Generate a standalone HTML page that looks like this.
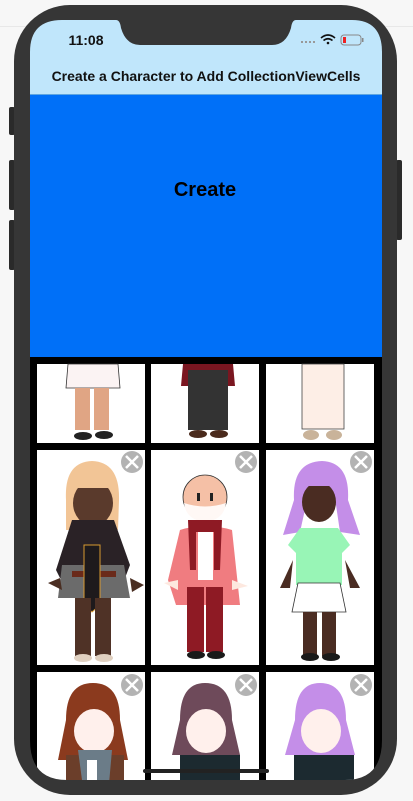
<!DOCTYPE html>
<html><head><meta charset="utf-8"><style>
html,body{margin:0;padding:0;width:413px;height:801px;overflow:hidden;background:#f7f7f7;font-family:"Liberation Sans",Arial,sans-serif}
</style></head><body>
<svg width="413" height="801" viewBox="0 0 413 801" xmlns="http://www.w3.org/2000/svg" style="position:absolute;left:0;top:0">
<defs>
<clipPath id="scr"><path d="M30 20 H116 Q120 20 121 28 Q126 45 140 45 H272 Q286 45 291 28 Q292 20 296 20 H352 Q382 20 382 52 V740 Q382 780 345 780 H67 Q30 780 30 740 V52 Q30 20 62 20 Z"/></clipPath>
<g id="x"><circle r="11" fill="#b3b3b3"/><path d="M-6 -6 L6 6 M6 -6 L-6 6" stroke="#fff" stroke-width="2.5"/></g>
</defs>
<rect x="0" y="26" width="413" height="1" fill="#e8e8e8"/>
<rect x="9" y="107" width="6" height="28" rx="2" fill="#2a2a2a"/>
<rect x="9" y="160" width="6" height="50" rx="2" fill="#2a2a2a"/>
<rect x="9" y="220" width="6" height="50" rx="2" fill="#2a2a2a"/>
<rect x="396" y="160" width="6" height="80" rx="2" fill="#2a2a2a"/>
<rect x="14" y="5" width="383" height="790" rx="56" fill="#363636"/>
<g clip-path="url(#scr)">
<rect x="30" y="20" width="352" height="76" fill="#c0e6fb"/>
<rect x="30" y="94" width="352" height="1" fill="#5fa6e0"/>
<rect x="30" y="95" width="352" height="263" fill="#0070f8"/>
<rect x="30" y="357" width="352" height="430" fill="#000"/>
<!-- cells -->
<g fill="#fff">
<rect x="37" y="364" width="108" height="79"/><rect x="151" y="364" width="108" height="79"/><rect x="266" y="364" width="108" height="79"/>
<rect x="37" y="450" width="108" height="215"/><rect x="151" y="450" width="108" height="215"/><rect x="266" y="450" width="108" height="215"/>
<rect x="37" y="672" width="108" height="120"/><rect x="151" y="672" width="108" height="120"/><rect x="266" y="672" width="108" height="120"/>
</g>
<!-- row1 -->
<path d="M68 364 H118 L120 388 H66 Z" fill="#fbf3f3" stroke="#333" stroke-width="0.8"/>
<rect x="75" y="388" width="15" height="42" fill="#e0a584"/><rect x="94" y="388" width="15" height="42" fill="#e0a584"/>
<ellipse cx="83" cy="436" rx="9" ry="4" fill="#222"/><ellipse cx="104" cy="435" rx="9" ry="4" fill="#222"/>
<path d="M183 364 H233 L235 386 H181 Z" fill="#7a1620"/>
<rect x="188" y="370" width="40" height="60" fill="#333"/>
<ellipse cx="198" cy="434" rx="9" ry="4" fill="#4a2a1c"/><ellipse cx="219" cy="434" rx="9" ry="4" fill="#4a2a1c"/>
<rect x="302" y="364" width="42" height="65" fill="#fdeee6" stroke="#444" stroke-width="0.8"/>
<ellipse cx="311" cy="435" rx="8" ry="5" fill="#c9b39a"/><ellipse cx="334" cy="435" rx="8" ry="5" fill="#c9b39a"/>
<!-- char 1 -->
<path d="M66 500 Q64 462 92 461 Q120 462 119 500 L118 530 H66 Z" fill="#f2c596"/>
<ellipse cx="93" cy="503" rx="20" ry="23" fill="#5a3a2c"/>
<rect x="73" y="478" width="40" height="10" fill="#f2c596"/>
<path d="M72 520 H114 L130 565 L125 578 H60 L56 570 Z" fill="#2a2226"/>
<path d="M62 565 H124 L130 598 H58 Z" fill="#6b6b6b"/>
<rect x="72" y="571" width="44" height="6" fill="#6a2a1a"/>
<path d="M84 545 H100 V605 L92 612 L84 605 Z" fill="#1e1a1c" stroke="#d89a30" stroke-width="1"/>
<path d="M48 583 L60 578 L62 590 Z M130 578 L144 585 L132 592 Z" fill="#4a2e22"/>
<rect x="75" y="598" width="16" height="58" fill="#4f3226"/><rect x="95" y="598" width="16" height="58" fill="#4f3226"/>
<ellipse cx="83" cy="658" rx="9" ry="4" fill="#e0d0c0"/><ellipse cx="104" cy="658" rx="9" ry="4" fill="#e0d0c0"/>
<use href="#x" x="132" y="462"/>
<!-- char 2 -->
<circle cx="205" cy="497" r="22" fill="#f5c0a6" stroke="#333" stroke-width="0.8"/>
<path d="M184 503 Q205 510 226 503 Q224 520 205 522 Q186 520 184 503 Z" fill="#fff8f5"/>
<rect x="197" y="493" width="3" height="8" fill="#222"/><rect x="210" y="493" width="3" height="8" fill="#222"/>
<path d="M180 530 Q205 522 232 530 L240 605 H176 L168 580 Z" fill="#f07c80"/>
<rect x="198" y="530" width="15" height="50" fill="#fff"/>
<path d="M188 520 H222 L220 570 H214 V532 H196 V570 H190 Z" fill="#8e1a24"/>
<path d="M164 583 L178 580 L178 590 Z M232 580 L248 586 L232 590 Z" fill="#fde8df"/>
<rect x="187" y="587" width="17" height="65" fill="#8e1a24"/><rect x="206" y="587" width="17" height="65" fill="#8e1a24"/>
<ellipse cx="196" cy="655" rx="9" ry="4" fill="#1a1a1a"/><ellipse cx="216" cy="655" rx="9" ry="4" fill="#1a1a1a"/>
<use href="#x" x="246" y="462"/>
<!-- char 3 -->
<path d="M294 500 Q292 462 322 461 Q350 462 348 500 L360 535 L340 532 L336 505 H306 L300 532 L283 535 Z" fill="#c48ee8"/>
<ellipse cx="319" cy="502" rx="17" ry="20" fill="#4a2c22"/>
<rect x="300" y="472" width="42" height="14" fill="#c48ee8"/>
<path d="M300 528 H338 L350 545 L342 553 V585 H296 V553 L288 545 Z" fill="#98f5b6"/>
<path d="M293 560 L280 588 L290 588 Z M345 560 L360 588 L350 588 Z" fill="#4a2c22"/>
<path d="M298 583 H340 L346 612 H292 Z" fill="#fff" stroke="#333" stroke-width="0.8"/>
<rect x="303" y="612" width="14" height="44" fill="#4a2c22"/><rect x="322" y="612" width="14" height="44" fill="#4a2c22"/>
<ellipse cx="310" cy="657" rx="9" ry="4" fill="#1a1a1a"/><ellipse cx="331" cy="657" rx="9" ry="4" fill="#1a1a1a"/>
<use href="#x" x="361" y="462"/>
<!-- row3 -->
<path d="M66 720 Q66 683 93 683 Q120 683 120 720 L128 760 H58 Z" fill="#8b3a1e"/>
<ellipse cx="94" cy="731" rx="20" ry="22" fill="#fff0ec"/>
<rect x="72" y="696" width="40" height="10" fill="#8b3a1e"/>
<rect x="66" y="755" width="58" height="40" fill="#6b3e2a"/>
<path d="M78 750 H112 L108 795 H84 Z" fill="#6b7c88"/><rect x="87" y="760" width="10" height="35" fill="#fff"/>
<use href="#x" x="132" y="685"/>
<path d="M180 720 Q180 683 205 683 Q232 683 232 720 L240 755 H172 Z" fill="#6e4a5a"/>
<ellipse cx="206" cy="731" rx="20" ry="22" fill="#fff0ec"/>
<rect x="186" y="696" width="40" height="10" fill="#6e4a5a"/>
<rect x="180" y="755" width="60" height="40" fill="#1c2a30"/>
<use href="#x" x="246" y="685"/>
<path d="M295 720 Q295 683 320 683 Q346 683 346 720 L355 755 H285 Z" fill="#c48ee8"/>
<ellipse cx="321" cy="731" rx="20" ry="22" fill="#fff0ec"/>
<rect x="300" y="696" width="40" height="10" fill="#c48ee8"/>
<rect x="294" y="755" width="60" height="40" fill="#1c2a30"/>
<use href="#x" x="361" y="685"/>
<rect x="143" y="769" width="126" height="4" rx="2" fill="#222"/>
</g>
<text x="86" y="45" font-size="14" font-weight="bold" fill="#111" text-anchor="middle">11:08</text>
<g fill="#999"><rect x="301" y="41" width="2" height="2"/><rect x="305" y="41" width="2" height="2"/><rect x="309" y="41" width="2" height="2"/><rect x="313" y="41" width="2" height="2"/></g>
<path d="M321 38 Q328 32 335 38 M323.5 40.5 Q328 37 332.5 40.5" stroke="#111" stroke-width="1.6" fill="none"/><circle cx="328" cy="43" r="1.3" fill="#111"/>
<rect x="341" y="35" width="20" height="10" rx="3" fill="none" stroke="#888" stroke-width="1"/>
<rect x="343" y="37" width="3" height="6" fill="#e22"/><rect x="362" y="38" width="1.5" height="4" fill="#888"/>
<text x="206" y="81" font-size="14" font-weight="bold" fill="#111" text-anchor="middle">Create a Character to Add CollectionViewCells</text>
<text x="205" y="196" font-size="20" font-weight="bold" fill="#000" text-anchor="middle">Create</text>
</svg>
</body></html>
